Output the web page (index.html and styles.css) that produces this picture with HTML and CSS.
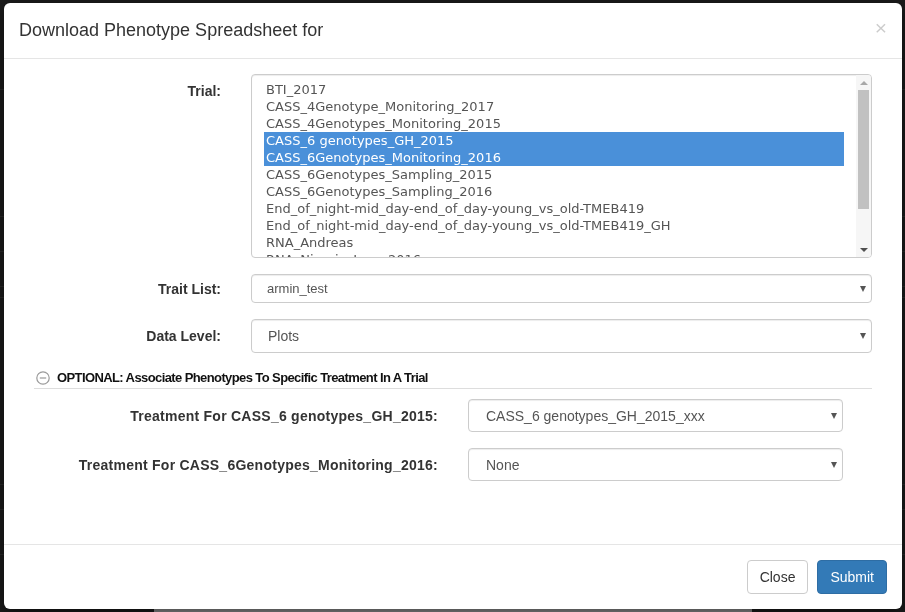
FILE: index.html
```html
<!DOCTYPE html>
<html lang="en">
<head>
<meta charset="utf-8">
<title>Download Phenotype Spreadsheet</title>
<link rel="stylesheet" href="styles.css">
</head>
<body>
<div class="page">
  <div class="page-row r1"></div>
  <div class="page-row r2"></div>
  <div class="page-row r3"></div>
  <div class="page-row r4"></div>
  <div class="page-row r5"></div>
  <div class="page-row r6"></div>
  <div class="page-row r7"></div>
  <div class="page-row r8"></div>
  <div class="page-row r9"></div>
  <div class="page-strip"><span>AI.MiIII.CC 0000</span></div>
</div>

<div class="modal">
  <div class="modal-header">
    <h4 class="modal-title">Download Phenotype Spreadsheet for</h4>
    <button class="close" type="button">×</button>
  </div>
  <div class="modal-body">
    <div class="form-row top">
      <div class="form-label">Trial:</div>
      <div class="listbox">
        <div class="options">
          <div class="option">BTI_2017</div>
          <div class="option">CASS_4Genotype_Monitoring_2017</div>
          <div class="option">CASS_4Genotypes_Monitoring_2015</div>
          <div class="option selected">CASS_6 genotypes_GH_2015</div>
          <div class="option selected">CASS_6Genotypes_Monitoring_2016</div>
          <div class="option">CASS_6Genotypes_Sampling_2015</div>
          <div class="option">CASS_6Genotypes_Sampling_2016</div>
          <div class="option">End_of_night-mid_day-end_of_day-young_vs_old-TMEB419</div>
          <div class="option">End_of_night-mid_day-end_of_day-young_vs_old-TMEB419_GH</div>
          <div class="option">RNA_Andreas</div>
          <div class="option">RNA_Nigeria_June_2016</div>
        </div>
        <div class="scrollbar">
          <div class="sb-btn"><span class="sb-up"></span></div>
          <div class="sb-thumb"></div>
          <div class="sb-track"></div>
          <div class="sb-btn"><span class="sb-down"></span></div>
        </div>
      </div>
    </div>

    <div class="form-row">
      <div class="form-label">Trait List:</div>
      <div class="select sm"><span>armin_test</span><span class="caret"></span></div>
    </div>

    <div class="form-row">
      <div class="form-label">Data Level:</div>
      <div class="select md"><span>Plots</span><span class="caret"></span></div>
    </div>

    <div class="optional">
      <svg class="toggle-icon" width="14" height="14" viewBox="0 0 14 14" aria-hidden="true">
        <circle cx="7" cy="7" r="6.2" fill="none" stroke="#9a9a9a" stroke-width="1.2"/>
        <line x1="3.8" y1="7" x2="10.2" y2="7" stroke="#9a9a9a" stroke-width="1.2"/>
      </svg>
      <span>OPTIONAL: Associate Phenotypes To Specific Treatment In A Trial</span>
    </div>

    <div class="form-row treat">
      <div class="treat-label">Treatment For CASS_6 genotypes_GH_2015:</div>
      <div class="select tr"><span>CASS_6 genotypes_GH_2015_xxx</span><span class="caret"></span></div>
    </div>

    <div class="form-row treat">
      <div class="treat-label">Treatment For CASS_6Genotypes_Monitoring_2016:</div>
      <div class="select tr"><span>None</span><span class="caret"></span></div>
    </div>
  </div>
  <div class="modal-footer">
    <button class="btn btn-default" type="button">Close</button>
    <button class="btn btn-primary" type="button">Submit</button>
  </div>
</div>
</body>
</html>
```

FILE: styles.css
```css
* { box-sizing: border-box; }

html, body {
  margin: 0;
  height: 100%;
}

body {
  background: #1b1b1b;
  font-family: "Liberation Sans", Arial, sans-serif;
  font-size: 14px;
  color: #333;
  overflow: hidden;
}

/* background page (dimmed) */
.page {
  display: flex;
  flex-direction: column;
}
.page-row { border-bottom: 1px solid #292929; }
.r1 { height: 90px; }
.r2 { height: 127px; }
.r3 { height: 35px; }
.r4 { height: 35px; }
.r5 { height: 11px; }
.r6 { height: 187px; }
.r7 { height: 25px; }
.r8 { height: 45px; }
.r9 { height: 54px; border-bottom: 0; }
.page-strip {
  margin-left: 154px;
  width: 598px;
  height: 30px;
  background: #8c8c8c;
  padding: 2px 0 0 70px;
  font-size: 14px;
  line-height: 16px;
  color: #3a3a3a;
}

/* modal */
.modal {
  position: fixed;
  left: 4px;
  top: 3px;
  width: 898px;
  height: 606px;
  background: #fff;
  border-radius: 6px;
  display: flex;
  flex-direction: column;
  box-shadow: 0 5px 15px rgba(0, 0, 0, .5);
}

.modal-header {
  display: flex;
  justify-content: space-between;
  align-items: flex-start;
  padding: 15px;
  border-bottom: 1px solid #e5e5e5;
}
.modal-title {
  margin: 0;
  font-size: 18px;
  font-weight: normal;
  line-height: 25px;
  color: #333;
}
.close {
  margin-top: -1px;
  padding: 0;
  border: 0;
  background: none;
  font-family: "Liberation Sans", Arial, sans-serif;
  font-size: 21px;
  font-weight: normal;
  line-height: 1;
  color: #000;
  opacity: .2;
}

.modal-body {
  flex: 1;
  padding: 15px 30px 15px 15px;
}

.form-row {
  display: flex;
  align-items: center;
  margin-bottom: 16px;
}
.form-row.top { align-items: flex-start; }

.form-label {
  width: 217px;
  flex: none;
  padding-right: 15px;
  text-align: right;
  font-weight: bold;
  line-height: 20px;
  color: #333;
}
.form-row.top .form-label { padding-top: 7px; }

/* list box */
.listbox {
  flex: 1;
  margin-left: 15px;
  height: 184px;
  display: flex;
  border: 1px solid #ccc;
  border-radius: 4px;
  overflow: hidden;
  box-shadow: inset 0 1px 1px rgba(0, 0, 0, .075);
}
.options {
  flex: 1;
  padding: 6px 12px 0;
  overflow: hidden;
  font-family: "DejaVu Sans", sans-serif;
  font-size: 13px;
  color: #555;
}
.option {
  height: 17px;
  line-height: 17px;
  padding: 0 2px;
  white-space: nowrap;
}
.option.selected {
  background: #4a90d9;
  color: #fff;
}

.scrollbar {
  width: 15px;
  flex: none;
  display: flex;
  flex-direction: column;
  background: #f6f6f6;
}
.sb-btn {
  height: 15px;
  display: flex;
  align-items: center;
  justify-content: center;
}
.sb-up {
  width: 0;
  height: 0;
  border-left: 4px solid transparent;
  border-right: 4px solid transparent;
  border-bottom: 4px solid #a8a8a8;
}
.sb-down {
  width: 0;
  height: 0;
  border-left: 4px solid transparent;
  border-right: 4px solid transparent;
  border-top: 4px solid #505050;
}
.sb-thumb {
  height: 119px;
  margin: 0 2px;
  background: #c1c1c1;
}
.sb-track { flex: 1; }

/* selects */
.select {
  flex: 1;
  margin-left: 15px;
  display: flex;
  align-items: center;
  justify-content: space-between;
  padding: 0 5px 0 15px;
  border: 1px solid #ccc;
  border-radius: 4px;
  color: #555;
  box-shadow: inset 0 1px 1px rgba(0, 0, 0, .075);
}
.select.sm { height: 29px; font-size: 13px; }
.select.md { height: 34px; font-size: 14px; padding-left: 16px; }
.select.tr {
  flex: none;
  width: 375px;
  height: 33px;
  margin-left: 30px;
  font-size: 14px;
  padding-left: 17px;
}
.caret {
  width: 0;
  height: 0;
  border-left: 3.5px solid transparent;
  border-right: 3.5px solid transparent;
  border-top: 6px solid #555;
}

/* optional section */
.optional {
  display: flex;
  align-items: center;
  gap: 7px;
  margin: 0 0 10px 15px;
  padding: 1px 0 2px 2px;
  border-bottom: 1px solid #ddd;
  font-size: 13px;
  font-weight: bold;
  line-height: 16px;
  letter-spacing: -0.6px;
  color: #111;
}
.toggle-icon { flex: none; }

.treat-label {
  width: 419px;
  flex: none;
  text-align: right;
  font-weight: bold;
  line-height: 20px;
  letter-spacing: 0.25px;
  color: #333;
}

/* footer */
.modal-footer {
  display: flex;
  justify-content: flex-end;
  gap: 9px;
  padding: 15px;
  border-top: 1px solid #e5e5e5;
}
.btn {
  height: 34px;
  padding: 6px 12px;
  border: 1px solid #ccc;
  border-radius: 4px;
  font-family: "Liberation Sans", Arial, sans-serif;
  font-size: 14px;
  line-height: 20px;
}
.btn-default {
  background: #fff;
  color: #333;
}
.btn-primary {
  background: #337ab7;
  border-color: #2e6da4;
  color: #fff;
}
```
